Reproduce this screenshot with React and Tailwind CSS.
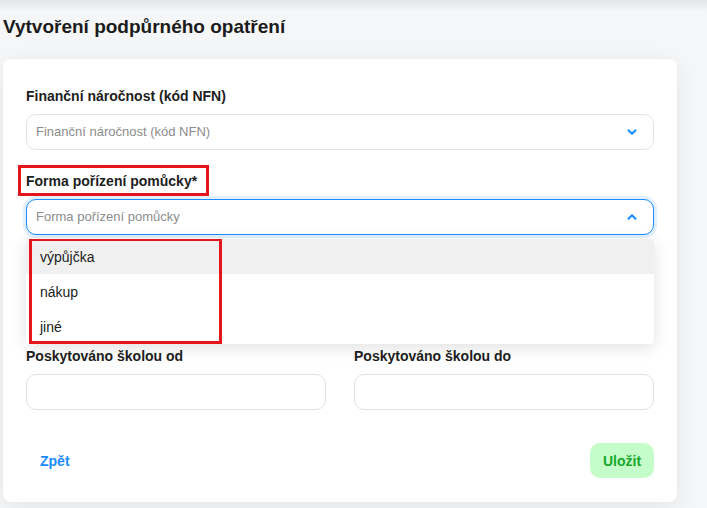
import { FiChevronDown, FiChevronUp } from "react-icons/fi";

const font = { fontFamily: '"Liberation Sans", Arial, sans-serif' };

const RedBox = ({ className }) => (
  <span className={`pointer-events-none absolute border-[3px] border-[#e4161b] ${className}`} />
);

const Select = ({ placeholder, open }) => (
  <div
    className={`flex h-9 items-center justify-between rounded-[10px] border bg-white pl-[9px] pr-[14px] ${
      open ? "border-[#1a8cff] ring-[3px] ring-[#e2efff]" : "border-[#e2e2e2]"
    }`}
  >
    <span className="text-[13px] text-[#8c8c8c]">{placeholder}</span>
    {open ? (
      <FiChevronUp className="text-[#1a8cff]" size={14} strokeWidth={3.5} />
    ) : (
      <FiChevronDown className="text-[#1a8cff]" size={14} strokeWidth={3.5} />
    )}
  </div>
);

const Label = ({ children }) => (
  <p className="mb-2 text-sm font-bold leading-5 text-[#1e1e1e]">{children}</p>
);

export default function App() {
  const options = ["výpůjčka", "nákup", "jiné"];
  return (
    <div style={font} className="relative min-h-[508px] overflow-hidden bg-[#f5f6f8]">
      <div className="pointer-events-none absolute inset-x-0 top-0 h-3 bg-gradient-to-b from-[#e4e5e7] to-transparent" />
      <h1 className="relative pl-[3px] pt-[15px] text-[19px] font-bold leading-6 text-[#1b1b1b]">
        Vytvoření podpůrného opatření
      </h1>

      <div className="ml-[3px] mt-5 w-[674px] rounded-lg bg-white px-[23px] pb-[24px] pt-[27px] shadow-[0_6px_24px_rgba(0,0,0,0.07)]">
        <Label>Finanční náročnost (kód NFN)</Label>
        <Select placeholder="Finanční náročnost (kód NFN)" />

        <div className="relative mt-[21px] inline-block">
          <Label>Forma pořízení pomůcky*</Label>
          <RedBox className="-left-2 -top-[6px] h-[31px] w-[191px]" />
        </div>
        <div className="relative">
          <Select placeholder="Forma pořízení pomůcky" open />
          <div className="absolute inset-x-0 top-10 z-10 overflow-hidden rounded bg-white shadow-[0_4px_16px_rgba(0,0,0,0.12)]">
            {options.map((o, i) => (
              <div
                key={o}
                className={`flex h-[35px] items-center px-[14px] text-sm text-[#222] ${i === 0 ? "bg-[#f0f0f0]" : ""}`}
              >
                {o}
              </div>
            ))}
            <RedBox className="left-[3px] top-[-1px] h-[106px] w-[193px]" />
          </div>
        </div>

        <div className="mt-[111px] grid grid-cols-2 gap-7">
          <div>
            <Label>Poskytováno školou od</Label>
            <div className="h-9 rounded-[10px] border border-[#e2e2e2]" />
          </div>
          <div>
            <Label>Poskytováno školou do</Label>
            <div className="h-9 rounded-[10px] border border-[#e2e2e2]" />
          </div>
        </div>

        <div className="mt-[33px] flex items-center justify-between">
          <button className="px-[14px] text-sm font-bold text-[#1a8cff]">Zpět</button>
          <button className="h-[35px] w-16 rounded-[10px] bg-[#c4fdc9] text-sm font-bold text-[#18a82b]">
            Uložit
          </button>
        </div>
      </div>
    </div>
  );
}
